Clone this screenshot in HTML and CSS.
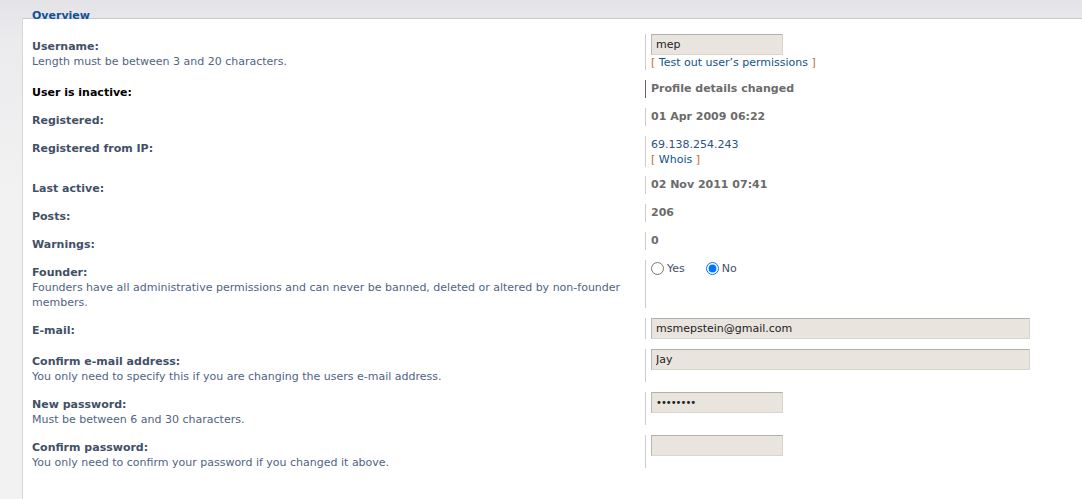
FILE: index.html
```html
<!DOCTYPE html>
<html>
    <head>
        <meta charset="utf-8">
        <title>Manage users - Overview</title>
        <link rel="stylesheet" href="styles.css">
    </head>
    <body>
        <div class="page">
            <div class="legend">Overview</div>
            <div class="panel">
                <dl class="row">
                    <dt><label>Username:</label><span class="explain">Length must be between 3 and 20 characters.</span></dt>
                    <dd>
                        <input class="inputbox short" type="text" value="mep">
                        <span class="link">[ <a href="#">Test out user’s permissions</a> ]</span>
                    </dd>
                </dl>
                <dl class="row">
                    <dt><label class="inactive">User is inactive:</label></dt>
                    <dd class="text dark"><strong>Profile details changed</strong></dd>
                </dl>
                <dl class="row">
                    <dt><label>Registered:</label></dt>
                    <dd class="text"><strong>01 Apr 2009 06:22</strong></dd>
                </dl>
                <dl class="row">
                    <dt><label>Registered from IP:</label></dt>
                    <dd class="text tall">
                        <span class="ip">69.138.254.243</span>
                        <span class="link">[ <a href="#">Whois</a> ]</span>
                    </dd>
                </dl>
                <dl class="row">
                    <dt><label>Last active:</label></dt>
                    <dd class="text"><strong>02 Nov 2011 07:41</strong></dd>
                </dl>
                <dl class="row">
                    <dt><label>Posts:</label></dt>
                    <dd class="text"><strong>206</strong></dd>
                </dl>
                <dl class="row">
                    <dt><label>Warnings:</label></dt>
                    <dd class="text"><strong>0</strong></dd>
                </dl>
                <dl class="row">
                    <dt><label>Founder:</label><span class="explain">Founders have all administrative permissions and can never be banned, deleted or altered by non-founder members.</span></dt>
                    <dd class="radios">
                        <label class="radio"><input type="radio" name="founder"> Yes</label>
                        <label class="radio"><input type="radio" name="founder" checked> No</label>
                    </dd>
                </dl>
                <dl class="row">
                    <dt><label>E-mail:</label></dt>
                    <dd><input class="inputbox long" type="text" value="msmepstein@gmail.com"></dd>
                </dl>
                <dl class="row">
                    <dt><label>Confirm e-mail address:</label><span class="explain">You only need to specify this if you are changing the users e-mail address.</span></dt>
                    <dd><input class="inputbox long" type="text" value="Jay"></dd>
                </dl>
                <dl class="row">
                    <dt><label>New password:</label><span class="explain">Must be between 6 and 30 characters.</span></dt>
                    <dd><input class="inputbox short" type="password" value="password"></dd>
                </dl>
                <dl class="row">
                    <dt><label>Confirm password:</label><span class="explain">You only need to confirm your password if you changed it above.</span></dt>
                    <dd><input class="inputbox short" type="password" value=""></dd>
                </dl>
            </div>
        </div>
    </body>
</html>
```

FILE: styles.css
```css
    body {
        margin: 0;
        height: 499px;
        background: linear-gradient(#e4e4e8, #ebebee 40px, #f2f2f2 200px);
        font-family: "DejaVu Sans", Verdana, sans-serif;
        font-size: 11px;
        overflow: hidden;
    }
    .page {
        padding: 9px 0 0 22px;
    }
    .legend {
        padding-left: 10px;
        font-size: 11px;
        line-height: 14px;
        font-weight: bold;
        color: #115098;
        margin-bottom: -5px;
    }
    .panel {
        min-height: 480px;
        background: #fff;
        border-top: 1px solid #c9c9cc;
        border-left: 1px solid #d8d8d8;
        padding: 15px 0 0 9px;
    }
    .row {
        display: flex;
        margin: 0 0 10px 0;
    }
    .row dt {
        width: 613px;
        padding-top: 5px;
        margin-bottom: -2px;
        line-height: 15px;
    }
    .row dt label {
        display: block;
        font-weight: bold;
        color: #425067;
    }
    .row dt label.inactive {
        color: #000;
    }
    .explain {
        display: block;
        color: #4f6384;
    }
    .row dd {
        flex: 1;
        margin: 0;
        padding-left: 5px;
        border-left: 1px solid #cccccc;
        line-height: 15px;
    }
    .row dd.text {
        padding-top: 1px;
    }
    .row dd.tall {
        margin-bottom: -1px;
    }
    .row dd.dark {
        border-left-color: #666;
    }
    .row dd strong {
        color: #6b6b6b;
    }
    .ip {
        display: block;
        color: #2d5384;
    }
    .link {
        display: block;
        color: #c46a2d;
    }
    .link a {
        color: #105289;
        text-decoration: none;
    }
    .inputbox {
        display: block;
        box-sizing: border-box;
        height: 21px;
        margin: 0;
        padding: 0 4px;
        background: #e9e4de;
        border: 1px solid #d8d4ce;
        border-top-color: #b2b0ad;
        border-left-color: #b8b6b2;
        font-family: "DejaVu Sans", Verdana, sans-serif;
        font-size: 11px;
        color: #222;
        outline: none;
    }
    .inputbox[type="password"] {
        font-size: 10px;
        letter-spacing: -1px;
    }
    .inputbox.short {
        width: 132px;
    }
    .inputbox.long {
        width: 379px;
    }
    .radios {
        display: flex;
        align-items: flex-start;
        gap: 21px;
        padding-top: 1px;
    }
    .radio {
        display: flex;
        align-items: center;
        gap: 3px;
        color: #425067;
    }
    .radio input {
        margin: 0;
        width: 13px;
        height: 13px;
    }
```
